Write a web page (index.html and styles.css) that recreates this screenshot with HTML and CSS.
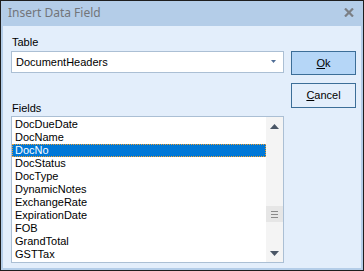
FILE: index.html
```html
<!DOCTYPE html>
<html>
<head>
<meta charset="utf-8">
<link rel="stylesheet" href="styles.css">
</head>
<body>
<div class="window">
  <div class="titlebar">
    <span class="title">Insert Data Field</span>
    <svg class="close" width="10" height="9" viewBox="0 0 10 9"><path d="M1 0.5 L9 8.5 M9 0.5 L1 8.5" stroke="#7b7f85" stroke-width="2.2"/></svg>
  </div>
  <div class="content">
    <div class="left">
      <div class="label label-table">Table</div>
      <div class="combo">
        <span class="combo-text">DocumentHeaders</span>
        <svg class="combo-arrow" width="5" height="3" viewBox="0 0 5 3"><path d="M0 0 H5 L2.5 3 Z" fill="#4f6d96"/></svg>
      </div>
      <div class="label label-fields">Fields</div>
      <div class="list">
        <div class="items">
          <div class="item">DocDueDate</div>
          <div class="item">DocName</div>
          <div class="item selected">DocNo</div>
          <div class="item">DocStatus</div>
          <div class="item">DocType</div>
          <div class="item">DynamicNotes</div>
          <div class="item">ExchangeRate</div>
          <div class="item">ExpirationDate</div>
          <div class="item">FOB</div>
          <div class="item">GrandTotal</div>
          <div class="item">GSTTax</div>
        </div>
        <div class="scrollbar">
          <svg class="arrow-up" width="9" height="5" viewBox="0 0 9 5"><path d="M4.5 0 L9 5 H0 Z" fill="#4a5666"/></svg>
          <div class="track">
            <div class="thumb">
              <span class="grip"></span><span class="grip"></span><span class="grip"></span>
            </div>
          </div>
          <svg class="arrow-down" width="9" height="5" viewBox="0 0 9 5"><path d="M0 0 H9 L4.5 5 Z" fill="#4a5666"/></svg>
        </div>
      </div>
    </div>
    <div class="right">
      <div class="btn btn-ok"><u>O</u>k</div>
      <div class="btn btn-cancel"><u>C</u>ancel</div>
    </div>
  </div>
</div>
</body>
</html>
```

FILE: styles.css
```css
* { box-sizing: border-box; }
html, body { margin: 0; padding: 0; }
body {
  width: 364px;
  height: 271px;
  overflow: hidden;
  font-family: "Liberation Sans", Arial, sans-serif;
  font-size: 11px;
  color: #000;
}
.window {
  width: 364px;
  height: 271px;
  border: 1px solid #1e1e1e;
  background: #b4cde8;
  padding: 0 2px 2px 2px;
  display: flex;
  flex-direction: column;
}
.titlebar {
  height: 25px;
  flex: none;
  display: flex;
  align-items: center;
  justify-content: space-between;
  padding: 0 7px 0 5px;
}
.title {
  font-family: "Noto Sans", "Open Sans", sans-serif;
  font-size: 12px;
  color: #72757a;
  line-height: 1;
  margin-top: -1px;
}
.close { display: block; margin-top: -3px; }
.content {
  flex: 1;
  background: #e3eefb;
  display: flex;
  padding: 0 5px 0 8px;
}
.left {
  width: 273px;
  display: flex;
  flex-direction: column;
}
.label {
  padding-left: 1px;
  line-height: 13px;
  height: 13px;
}
.label-table { margin-top: 10px; }
.label-fields { margin-top: 29px; }
.combo {
  margin-top: 2px;
  height: 22px;
  background: #fff;
  border: 1px solid #abbfd4;
  display: flex;
  align-items: center;
  justify-content: space-between;
  padding: 0 7px 0 4px;
}
.combo-text { line-height: 13px; }
.combo-arrow { display: block; margin-top: -1px; }
.list {
  margin-top: 1px;
  height: 147px;
  background: #fff;
  border: 1px solid #abbfd4;
  display: flex;
}
.items {
  flex: 1;
  padding-top: 1px;
}
.item {
  height: 13px;
  line-height: 13px;
  padding-left: 3px;
  white-space: nowrap;
}
.item.selected {
  background: #0078d7;
  color: #fff;
  outline: 1px dotted #f0a030;
  outline-offset: -1px;
}
.scrollbar {
  width: 17px;
  background: #f4f4f4;
  display: flex;
  flex-direction: column;
  align-items: center;
  padding: 7px 0 6px 0;
}
.arrow-up, .arrow-down { display: block; flex: none; }
.track {
  flex: 1;
  width: 100%;
  display: flex;
  flex-direction: column;
  justify-content: flex-end;
  padding-bottom: 29px;
}
.thumb {
  height: 16px;
  width: 100%;
  background: #e6e6e6;
  display: flex;
  flex-direction: column;
  align-items: center;
  justify-content: center;
  gap: 2px;
}
.grip {
  display: block;
  width: 7px;
  height: 1px;
  background: #8a8a8a;
}
.right {
  margin-left: 7px;
  width: 65px;
  display: flex;
  flex-direction: column;
  padding-top: 25px;
}
.btn {
  height: 24px;
  border: 1px solid #3c6e98;
  display: flex;
  align-items: center;
  justify-content: center;
  line-height: 13px;
}
.btn u { text-decoration: underline; text-underline-offset: 1px; }
.btn-ok { background: #b5d6f7; }
.btn-cancel { background: #e3eefb; margin-top: 8px; height: 25px; }
```
